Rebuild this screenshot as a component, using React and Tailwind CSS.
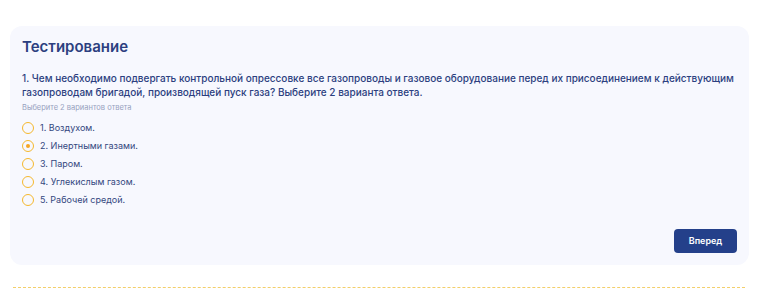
export default function App() {
  const options = [
    "1. Воздухом.",
    "2. Инертными газами.",
    "3. Паром.",
    "4. Углекислым газом.",
    "5. Рабочей средой.",
  ];
  return (
    <div className="w-[768px] h-[288px] bg-white overflow-hidden" style={{ fontFamily: "Inter, 'Noto Sans', sans-serif" }}>
      <div className="pt-[26px] pl-[10px] pr-[19px]">
        <div className="bg-[#f7f8fe] rounded-[12px] h-[239px] pl-[12px] pr-[12px] pt-[11px] relative">
          <h1 className="text-[15px] leading-[20px] font-semibold text-[#2c3f80]">Тестирование</h1>
          <p className="mt-[14px] text-[10px] leading-[14px] font-medium text-[#2c3f80]">
            1. Чем необходимо подвергать контрольной опрессовке все газопроводы и газовое оборудование перед их присоединением к действующим газопроводам бригадой, производящей пуск газа? Выберите 2 варианта ответа.
          </p>
          <p className="mt-[3px] text-[7.5px] leading-[12px] text-[#98a2bf]">Выберите 2 вариантов ответа</p>
          <div className="mt-[8px] flex flex-col gap-[6px]">
            {options.map((o, i) => (
              <div key={i} className="flex items-center gap-[6px] h-[12px]">
                <div className="w-[12px] h-[12px] rounded-full border-[1.5px] border-[#f5b82e] flex items-center justify-center">
                  {i === 1 && <div className="w-[4px] h-[4px] rounded-full bg-[#f5a623]" />}
                </div>
                <span className="text-[9px] leading-[12px] text-[#34477f]">{o}</span>
              </div>
            ))}
          </div>
          <button className="absolute right-[12px] bottom-[12px] w-[63px] h-[24px] rounded-[4px] bg-[#24408a] text-white text-[9px] font-semibold">
            Вперед
          </button>
        </div>
      </div>
      <div className="mt-[22px] ml-[13px] w-[732px] border-t border-dashed border-[#f3cf6a]" />
    </div>
  );
}
